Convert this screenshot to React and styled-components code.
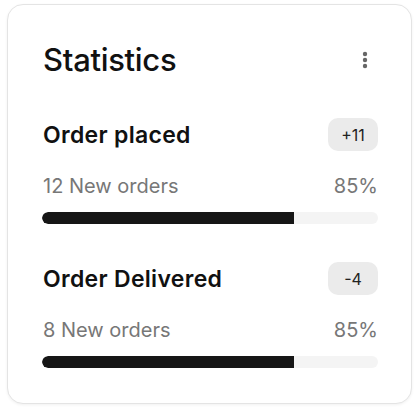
import React from "react";
import styled, { createGlobalStyle } from "styled-components";

const Global = createGlobalStyle`
  html, body { margin: 0; padding: 0; background: #ffffff; }
  body { font-family: Inter, "Noto Sans", sans-serif; color: #111111; }
`;

const Page = styled.div`
  padding: 4px 6px 6px 7px;
`;

const Card = styled.section`
  width: 405px;
  height: 400px;
  box-sizing: border-box;
  border: 1px solid #e4e4e4;
  border-radius: 16px;
  box-shadow: 0 1px 3px rgba(0, 0, 0, 0.06);
  background: #ffffff;
  padding: 37px 33px 0 34px;
  display: flex;
  flex-direction: column;
`;

const Header = styled.header`
  display: flex;
  align-items: center;
  justify-content: space-between;
  margin-bottom: 40px;
`;

const Title = styled.h2`
  margin: 0 0 0 1px;
  font-size: 31px;
  font-weight: 500;
  letter-spacing: -0.3px;
  line-height: 36px;
`;

const MenuButton = styled.button`
  border: 0;
  background: none;
  padding: 0;
  width: 20px;
  height: 24px;
  display: flex;
  align-items: center;
  justify-content: center;
  color: #666666;
  margin-right: 3px;
`;

const Stat = styled.div`
  display: flex;
  flex-direction: column;
  margin-bottom: 38px;
`;

const StatHead = styled.div`
  display: flex;
  align-items: center;
  justify-content: space-between;
`;

const StatName = styled.h3`
  margin: 0 0 0 1px;
  font-size: 23px;
  font-weight: 600;
  letter-spacing: 0.3px;
  line-height: 28px;
`;

const Badge = styled.span`
  background: #ebebeb;
  border-radius: 10px;
  height: 33px;
  min-width: 50px;
  padding: 0 10px;
  box-sizing: border-box;
  display: inline-flex;
  align-items: center;
  justify-content: center;
  font-size: 16px;
  color: #222222;
`;

const StatInfo = styled.div`
  display: flex;
  justify-content: space-between;
  align-items: center;
  margin-top: 23px;
  padding-left: 1px;
  font-size: 20px;
  color: #777777;
  line-height: 24px;
`;

const Track = styled.div`
  margin-top: 14px;
  height: 12px;
  border-radius: 6px;
  background: #f4f4f4;
  overflow: hidden;
`;

const Fill = styled.div`
  height: 100%;
  background: #161616;
  border-radius: 6px 0 0 6px;
`;

const stats = [
  { name: "Order placed", badge: "+11", info: "12 New orders", pct: "85%", fill: 75 },
  { name: "Order Delivered", badge: "-4", info: "8 New orders", pct: "85%", fill: 75 },
];

function Dots() {
  return (
    <svg width="6" height="18" viewBox="0 0 6 18" fill="currentColor">
      <circle cx="3" cy="3" r="2.2" />
      <circle cx="3" cy="9" r="2.2" />
      <circle cx="3" cy="15" r="2.2" />
    </svg>
  );
}

export default function App() {
  return (
    <Page>
      <Global />
      <Card>
        <Header>
          <Title>Statistics</Title>
          <MenuButton aria-label="More">
            <Dots />
          </MenuButton>
        </Header>
        {stats.map((s) => (
          <Stat key={s.name}>
            <StatHead>
              <StatName>{s.name}</StatName>
              <Badge>{s.badge}</Badge>
            </StatHead>
            <StatInfo>
              <span>{s.info}</span>
              <span>{s.pct}</span>
            </StatInfo>
            <Track>
              <Fill style={{ width: `${s.fill}%` }} />
            </Track>
          </Stat>
        ))}
      </Card>
    </Page>
  );
}
